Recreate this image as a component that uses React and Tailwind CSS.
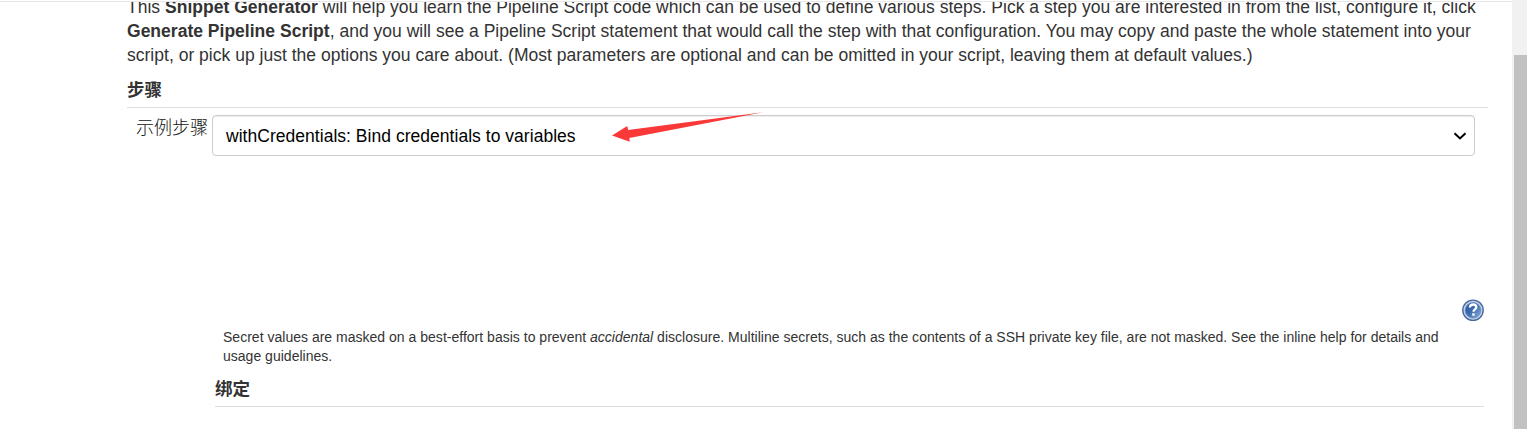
import React from "react";

function HelpIcon() {
  return (
    <svg className="h-[22px] w-[22px]" viewBox="0 0 22 22" aria-label="Help">
      <defs>
        <linearGradient id="helpFill" x1="0" y1="0" x2="1" y2="1">
          <stop offset="0" stopColor="#23509a" />
          <stop offset="0.5" stopColor="#3f6fb2" />
          <stop offset="1" stopColor="#8fb2dc" />
        </linearGradient>
      </defs>
      <circle cx="11" cy="11.3" r="10.2" fill="#c3d3ea" stroke="#47699d" strokeWidth="1.4" />
      <circle cx="11" cy="11.3" r="7.8" fill="url(#helpFill)" stroke="#6a8cbd" strokeWidth="0.8" />
      <path d="M7.8 8.5C8 6.3 9.3 5.5 11.1 5.5c1.9 0 3.2 1 3.2 2.7 0 2.2-2.8 2.3-2.8 4.6" fill="none" stroke="#fff" strokeWidth="2.3" />
      <rect x="10.2" y="14.3" width="2.5" height="2.4" fill="#fff" />
    </svg>
  );
}

function SectionTitle({ children }) {
  return (
    <h2 className="flex h-[35px] items-center border-b border-[#dddddd] text-[17.5px] font-bold leading-[34px]">
      {children}
    </h2>
  );
}

export default function App() {
  return (
    <div className="flex h-[429px] w-[1527px] overflow-hidden bg-white font-['Liberation_Sans','Noto_Sans_CJK_SC',sans-serif] text-[#333333]">
      <main className="h-full w-[1512px] shrink-0 pt-px">
        <div className="h-[72px] overflow-hidden border-t border-[#e7e7e7] pl-[127px]">
          <p className="-mt-[7px] whitespace-nowrap text-[17.5px] leading-6 tracking-[0.014px]">
            This <b>Snippet Generator</b> will help you learn the Pipeline Script code which can be used to define various steps. Pick a step you are interested in from the list, configure it, click
            <br />
            <b>Generate Pipeline Script</b>, and you will see a Pipeline Script statement that would call the step with that configuration. You may copy and paste the whole statement into your
            <br />
            script, or pick up just the options you care about. (Most parameters are optional and can be omitted in your script, leaving them at default values.)
          </p>
        </div>
        <div className="ml-[127px] w-[1361px]">
          <SectionTitle>步骤</SectionTitle>
        </div>
        <div className="relative flex h-[192px] pl-[136px] pt-[7px]">
          <label className="w-[76px] shrink-0 whitespace-nowrap pt-px text-[18px] font-light leading-6 text-[#111111]">示例步骤</label>
          <div className="flex h-[41px] w-[1263px] items-center justify-between rounded-[4px] border border-[#cccccc] pl-[13px] pr-[7px] text-[17.5px] tracking-[0.03px] text-black shadow-[inset_0_1px_1px_rgba(0,0,0,0.075)]">
            <span className="pt-px">withCredentials: Bind credentials to variables</span>
            <svg className="h-[10px] w-[14px]" viewBox="0 0 14 10" fill="none" stroke="#000" strokeWidth="2">
              <path d="M1.5 2.2 7 7.4l5.5-5.2" />
            </svg>
          </div>
          <svg className="absolute left-[610px] top-0 h-[40px] w-[160px]" viewBox="0 0 160 40">
            <path d="M2 27.5 17.3 18l.8 4L153 4.2 19.3 30l.5 3.8Z" fill="#fb3838" />
          </svg>
        </div>
        <div className="-mt-px flex h-[29px] justify-end pr-[28px]">
          <HelpIcon />
        </div>
        <p className="ml-[223px] whitespace-nowrap text-[14px] leading-[19px] tracking-[0.013px]">
          Secret values are masked on a best-effort basis to prevent <i>accidental</i> disclosure. Multiline secrets, such as the contents of a SSH private key file, are not masked. See the inline help for details and
          <br />
          usage guidelines.
        </p>
        <div className="ml-[215px] mt-[6px] w-[1269px]">
          <SectionTitle>绑定</SectionTitle>
        </div>
      </main>
      <aside className="h-full w-[15px] bg-[#f1f1f1] pl-[2px] pt-[55px]">
        <div className="h-full bg-[#c1c1c1]" />
      </aside>
    </div>
  );
}
